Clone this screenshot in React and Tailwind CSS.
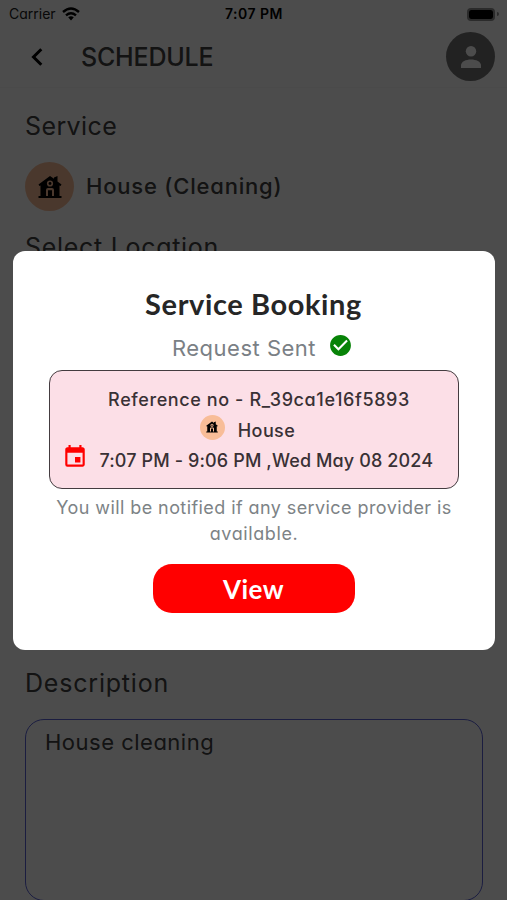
import React from "react";
import { MdCheckCircle, MdEvent } from "react-icons/md";

const bodyFont = "font-['Inter','Noto_Sans',sans-serif] [font-feature-settings:'cv11']";
const titleFont = "font-['Lato','Open_Sans',sans-serif]";

function HouseIcon({ className }) {
  return (
    <svg viewBox="0 0 24 24" className={className} fill="currentColor">
      <path
        fillRule="evenodd"
        d="M12 1 16 3.8V2.6L19.5 1V6.4L23.5 9.5 22.6 11 21.5 10.5V21H23.5V23H.5V21H2.5V10.5L1.4 11 .5 9.5ZM12 5.4A3.1 3.1 0 1 0 12 11.6 3.1 3.1 0 1 0 12 5.4ZM8 21H10V15.2H14V21H16V15Q16 13 14 13H10Q8 13 8 15Z"
      />
      <circle cx="12" cy="8.5" r="1.4" />
    </svg>
  );
}

function WifiIcon() {
  return (
    <svg viewBox="0 0 18 14" className="h-3.5 w-[18px]" fill="none" stroke="black" strokeWidth="2.4">
      <path d="M1 5Q9-2 17 5" />
      <path d="M4 8.3Q9 4 14 8.3" />
      <path d="M6.2 10.3Q9 8.2 11.8 10.3L9 13.4Z" fill="black" stroke="none" />
    </svg>
  );
}

function StatusBar() {
  return (
    <div className="flex h-7 items-center justify-between pl-[9px] pr-2 text-sm text-black">
      <div className="flex w-40 items-center gap-1.5 text-[#202020]">
        <span>Carrier</span>
        <WifiIcon />
      </div>
      <span className="text-sm font-semibold tracking-[0.5px] whitespace-nowrap">7:07 PM</span>
      <div className="flex w-40 items-center justify-end gap-0.5">
        <div className="h-[13px] w-7 rounded-[4px] border-2 border-[#909090]">
          <div className="h-full rounded-[2px] bg-black" />
        </div>
        <div className="h-1 w-0.5 rounded-r bg-[#909090]" />
      </div>
    </div>
  );
}

function Header() {
  return (
    <div className="flex h-[60px] items-center border-b border-[#f7f7f7] pl-[31px] pr-3 pb-0.5">
      <svg viewBox="0 0 12 18" className="h-[18px] w-3" fill="none" stroke="black" strokeWidth="3">
        <path d="M10.3 1.3 2.5 9l7.8 7.7" />
      </svg>
      <h1 className="ml-[38px] flex-1 text-[25px] font-medium leading-8 tracking-[-0.2px] whitespace-nowrap">
        SCHEDULE
      </h1>
      <div className="flex size-[49px] items-center justify-center rounded-full bg-[#737373]">
        <svg viewBox="0 0 20 22" className="h-[22px] w-5" fill="white">
          <circle cx="10" cy="5.2" r="5.2" />
          <path d="M0 22V19.5C0 11.5 20 11.5 20 19.5V22Z" />
        </svg>
      </div>
    </div>
  );
}

function BookingModal() {
  return (
    <div className="mt-[251px] flex h-[399px] w-[482px] flex-col items-center rounded-[12px] bg-white">
      <h2 className={`mt-[35px] text-[29px] font-bold leading-[36px] tracking-[0.6px] whitespace-nowrap text-[#262626] ${titleFont}`}>
        Service Booking
      </h2>
      <div className="mt-1.5 flex h-[42px] items-start gap-3 pl-[18px] text-[#7a8085]">
        <span className="mt-1 text-[22px] leading-[32px] tracking-[0.5px] whitespace-nowrap">Request Sent</span>
        <MdCheckCircle className="mt-[5px] size-[25px] text-[#078307]" />
      </div>

      <div className="flex h-[119px] w-[410px] flex-col rounded-[13px] border-[1.5px] border-[#443c40] bg-[#fcdfe7] pt-[13px] text-lg font-medium leading-[31px] whitespace-nowrap text-[#393135]">
        <p className="pl-[11px] text-center tracking-[0.6px]">Reference no - R_39ca1e16f5893</p>
        <div className="flex h-[30px] items-center justify-center gap-[13px] pr-3">
          <div className="mb-1.5 flex size-[25px] items-center justify-center rounded-full bg-[#f8bd98]">
            <HouseIcon className="size-3 text-black" />
          </div>
          <span className="tracking-[0.4px]">House</span>
        </div>
        <div className="flex h-[31px] items-center gap-3 pl-3">
          <MdEvent className="mb-[7px] size-[26px] text-[#ff0000]" />
          <span className="tracking-[0.12px]">7:07 PM - 9:06 PM ,Wed May 08 2024</span>
        </div>
      </div>

      <p className="mt-1.5 pl-px text-center text-lg leading-[26px] tracking-[0.42px] whitespace-nowrap text-[#7d8386]">
        You will be notified if any service provider is
        <br />
        <span className="tracking-[0.6px]">available.</span>
      </p>
      <button className={`mt-[17px] h-[49px] w-[202px] rounded-[19px] bg-[#ff0000] pt-px text-[26px] font-bold tracking-[0.4px] text-white ${titleFont}`}>
        View
      </button>
    </div>
  );
}

export default function App() {
  return (
    <div className={`relative h-[900px] w-full overflow-hidden bg-white text-[#404040] ${bodyFont}`}>
      <StatusBar />
      <Header />

      <div className="px-[25px] pt-5">
        <h3 className="text-[25px] leading-9 tracking-[0.4px] whitespace-nowrap">Service</h3>
        <div className="mt-[18px] flex items-center gap-3">
          <div className="flex size-[49px] items-center justify-center rounded-full bg-[#f8bd98]">
            <HouseIcon className="size-6 text-black" />
          </div>
          <span className="text-[22px] font-medium tracking-[0.8px] whitespace-nowrap">House (Cleaning)</span>
        </div>
        <h3 className="mt-[18px] text-[25px] leading-9 tracking-[0.7px] whitespace-nowrap">Select Location</h3>
        <h3 className="mt-[400px] text-[25px] leading-9 tracking-[0.8px] whitespace-nowrap">Description</h3>
        <div className="mt-[18px] h-[182px] w-[458px] rounded-[19px] border-[1.5px] border-[#5a62d8] px-[19px] pt-1.5 text-[22px] leading-8 tracking-[0.5px]">
          House cleaning
        </div>
      </div>

      {/* Booking confirmation over the dimmed screen */}
      <div className="absolute inset-0 flex justify-center bg-black/70">
        <BookingModal />
      </div>
    </div>
  );
}
